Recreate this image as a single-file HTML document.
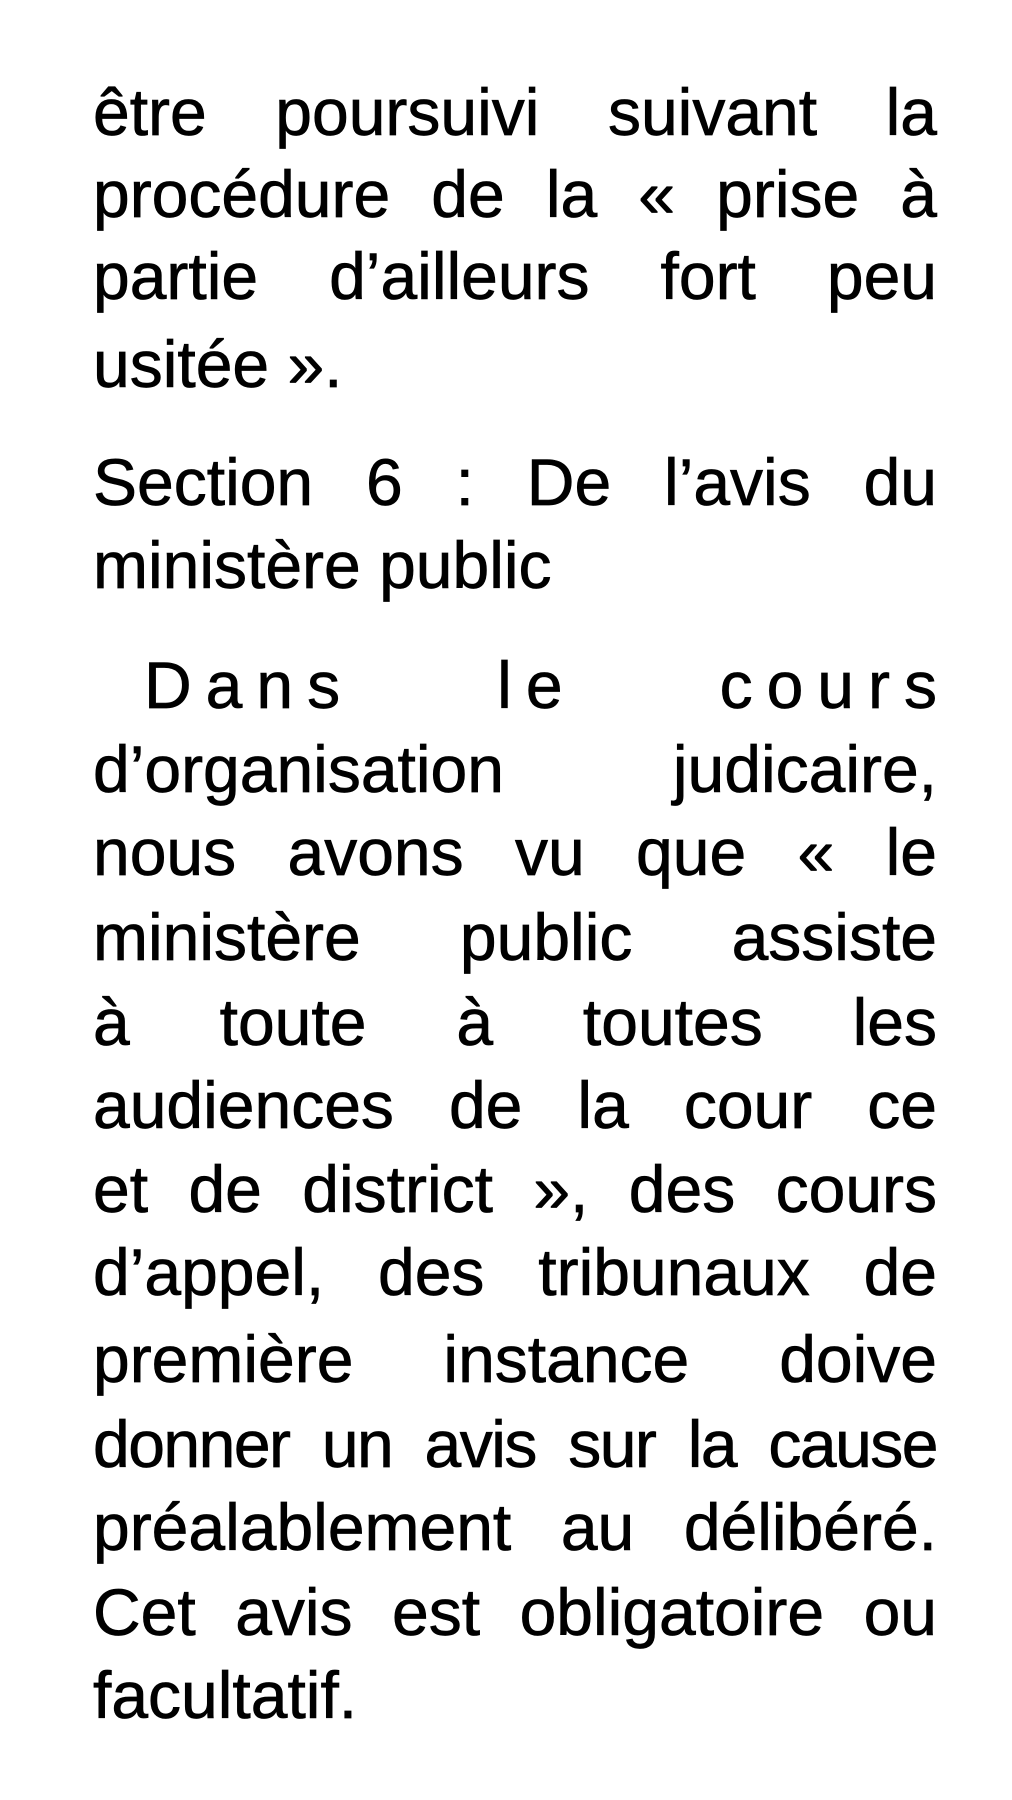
<!DOCTYPE html>
<html><head><meta charset="utf-8"><style>
html,body{margin:0;padding:0;background:#fff;width:1012px;height:1800px;overflow:hidden}
.l{position:absolute;left:93px;width:844px;font-family:"Liberation Sans",sans-serif;font-size:66px;line-height:84px;color:#000;text-align:justify;text-align-last:justify;-webkit-text-stroke:0.7px #000}
</style></head><body>
<div class="l" style="top:70px">être poursuivi suivant la</div>
<div class="l" style="top:152px">procédure de la « prise à</div>
<div class="l" style="top:234px">partie d’ailleurs fort peu</div>
<div class="l" style="top:322px;text-align-last:left">usitée ».</div>
<div class="l" style="top:440px">Section 6 : De l’avis du</div>
<div class="l" style="top:523px;text-align-last:left">ministère public</div>
<div class="l" style="top:643px;left:144px;width:807px;letter-spacing:14px">Dans le cours</div>
<div class="l" style="top:727px">d’organisation judicaire,</div>
<div class="l" style="top:810px">nous avons vu que « le</div>
<div class="l" style="top:895px">ministère public assiste</div>
<div class="l" style="top:980px">à toute à toutes les</div>
<div class="l" style="top:1063px">audiences de la cour ce</div>
<div class="l" style="top:1147px">et de district », des cours</div>
<div class="l" style="top:1230px">d’appel, des tribunaux de</div>
<div class="l" style="top:1317px">première instance doive</div>
<div class="l" style="top:1402px;letter-spacing:-1.5px">donner un avis sur la cause</div>
<div class="l" style="top:1485px">préalablement au délibéré.</div>
<div class="l" style="top:1570px">Cet avis est obligatoire ou</div>
<div class="l" style="top:1653px;text-align-last:left">facultatif.</div>
</body></html>
